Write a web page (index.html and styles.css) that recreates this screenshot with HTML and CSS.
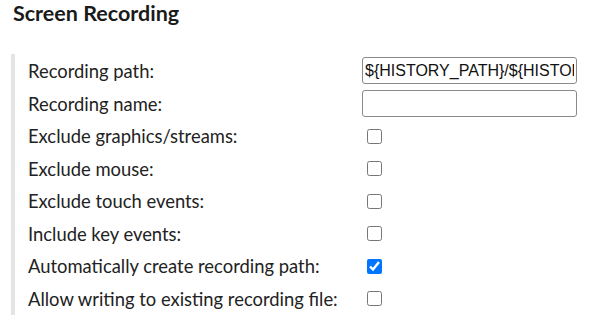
FILE: index.html
```html
<!DOCTYPE html>
<html>
<head>
<meta charset="utf-8">
<link rel="stylesheet" href="styles.css">
</head>
<body>
<h3 class="title">Screen Recording</h3>
<div class="group">
  <label class="lbl">Recording path:</label>
  <div class="ctl"><input class="txt" type="text" value="${HISTORY_PATH}/${HISTORY_UUID}"></div>
  <label class="lbl">Recording name:</label>
  <div class="ctl"><input class="txt" type="text" value=""></div>
  <label class="lbl">Exclude graphics/streams:</label>
  <div class="ctl"><input class="chk" type="checkbox"></div>
  <label class="lbl">Exclude mouse:</label>
  <div class="ctl"><input class="chk" type="checkbox"></div>
  <label class="lbl">Exclude touch events:</label>
  <div class="ctl"><input class="chk" type="checkbox"></div>
  <label class="lbl">Include key events:</label>
  <div class="ctl"><input class="chk" type="checkbox"></div>
  <label class="lbl">Automatically create recording path:</label>
  <div class="ctl"><input class="chk" type="checkbox" checked></div>
  <label class="lbl">Allow writing to existing recording file:</label>
  <div class="ctl"><input class="chk" type="checkbox"></div>
</div>
</body>
</html>
```
FILE: styles.css
```css
html, body {
  margin: 0;
  padding: 0;
  background: #ffffff;
}
body {
  font-family: Lato, "Open Sans", sans-serif;
  color: #222222;
}
.title {
  font-family: Lato, sans-serif;
  font-weight: 700;
  font-size: 21.5px;
  line-height: 26px;
  margin: 0 0 0 13px;
  color: #1a1a1a;
}
.group {
  margin: 28px 0 0 11px;
  border-left: 4px solid #e4e4e4;
  padding-left: 13px;
  display: grid;
  grid-template-columns: 334px 215px;
  grid-template-rows: 33px 33px repeat(6, 32.5px);
  align-items: center;
}
.lbl {
  font-size: 18.4px;
  line-height: 22px;
  color: #222222;
}
.ctl {
  display: flex;
  align-items: center;
}
.txt {
  box-sizing: border-box;
  width: 215px;
  height: 27px;
  margin: 0;
  border: 1px solid #8a8a8a;
  border-radius: 3px;
  padding: 1px 2px;
  font-family: "Liberation Sans", Arial, sans-serif;
  font-size: 16px;
  color: #111111;
  background: #ffffff;
}
.chk {
  width: 15px;
  height: 15px;
  margin: 0 0 0 5px;
  accent-color: #0075ff;
}
```
